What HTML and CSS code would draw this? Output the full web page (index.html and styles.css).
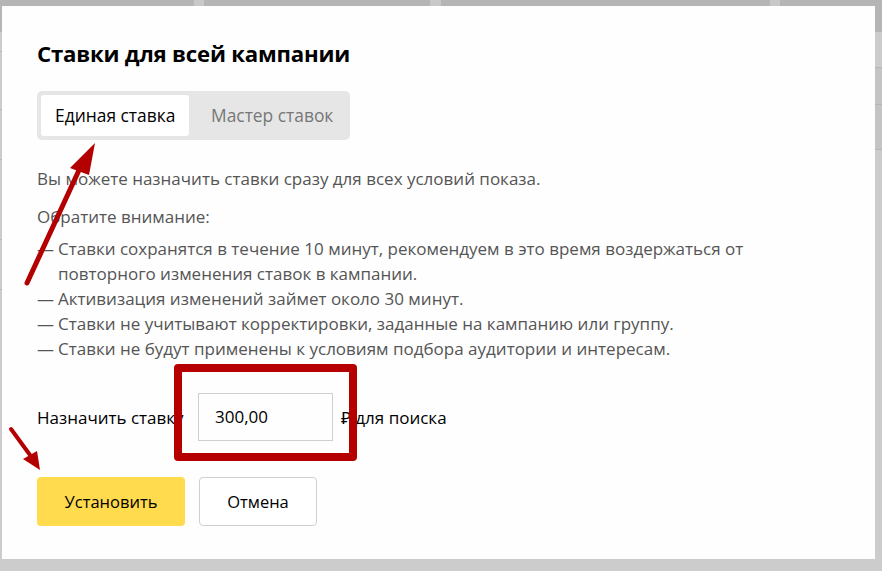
FILE: index.html
```html
<!DOCTYPE html>
<html lang="ru">
<head>
<meta charset="utf-8">
<link rel="stylesheet" href="styles.css">
</head>
<body>
<div class="page">
  <div class="topbar">
    <span class="seg s1"></span><span class="seg s2"></span><span class="seg s3"></span>
  </div>
  <div class="leftcol">
    <div class="lrow r1"></div>
    <div class="lrow r2"></div>
    <div class="lrow r3"></div>
    <div class="lrow r4"></div>
    <div class="lrow r5"></div>
  </div>
  <div class="rightcol">
    <div class="rrow"></div>
    <div class="rrow"></div>
    <div class="rrow"></div>
  </div>
</div>

<div class="modal">
  <h1 class="title">Ставки для всей кампании</h1>
  <div class="tabs">
    <div class="tab active">Единая ставка</div>
    <div class="tab">Мастер ставок</div>
  </div>
  <p class="lead">Вы можете назначить ставки сразу для всех условий показа.</p>
  <p class="note">Обратите внимание:</p>
  <ul class="list">
    <li>Ставки сохранятся в течение 10 минут, рекомендуем в это время воздержаться от повторного изменения ставок в кампании.</li>
    <li>Активизация изменений займет около 30 минут.</li>
    <li>Ставки не учитывают корректировки, заданные на кампанию или группу.</li>
    <li>Ставки не будут применены к условиям подбора аудитории и интересам.</li>
  </ul>
  <div class="bid">
    <span class="bid-label">Назначить ставку</span>
    <div class="input">300,00</div>
    <span class="bid-suffix">₽ для поиска</span>
  </div>
  <div class="actions">
    <button class="btn primary">Установить</button>
    <button class="btn secondary">Отмена</button>
  </div>
</div>

<div class="highlight"></div>
<svg class="arrows" width="882" height="571" viewBox="0 0 882 571">
  <path d="M27 283 L80 168" stroke="#b30000" stroke-width="5" stroke-linecap="round" fill="none"/>
  <path d="M95 143 L70 168 L89 175 Z" fill="#b30000"/>
  <path d="M11 429 L30 455" stroke="#b30000" stroke-width="4" stroke-linecap="round" fill="none"/>
  <path d="M40 470 L23 459 L37 451 Z" fill="#b30000"/>
</svg>
</body>
</html>
```
FILE: styles.css
```css
* { box-sizing: border-box; }
html, body { margin: 0; padding: 0; }
body {
  width: 882px;
  height: 571px;
  overflow: hidden;
  background: #cccccc;
  font-family: "Open Sans", "Noto Sans", sans-serif;
  position: relative;
}
.page { width: 882px; height: 571px; }
.topbar {
  height: 32px;
  background: #b5b5b5;
  position: relative;
}
.seg { position: absolute; top: 0; height: 6px; background: #c8c8c8; }
.s1 { left: 194px; width: 10px; }
.s2 { left: 430px; width: 11px; }
.s3 { left: 770px; width: 10px; }
.leftcol { position: absolute; left: 0; top: 32px; width: 3px; }
.lrow { border-bottom: 1px solid #b9b9b9; }
.r1 { height: 20px; }
.r2 { height: 58px; }
.r3 { height: 50px; }
.r4 { height: 80px; }
.r5 { height: 50px; }
.rightcol { position: absolute; right: 0; top: 32px; width: 7px; }
.rrow { height: 36px; border-bottom: 1px solid #b5b5b5; }
.rrow:nth-child(2) { height: 37px; background: #c4c4c4; }
.rrow:nth-child(3) { height: 45px; background: #c4c4c4; }

.modal {
  position: absolute;
  left: 2px;
  top: 6px;
  width: 873px;
  height: 553px;
  background: #fefefe;
  padding: 32px 35px 0 35px;
}
.title {
  margin: 0;
  font-size: 22.2px;
  font-weight: 700;
  color: #000;
  line-height: 32px;
  letter-spacing: -0.2px;
}
.tabs {
  margin-top: 21px;
  display: inline-flex;
  background: #e6e6e6;
  border-radius: 5px;
  padding: 4px;
  width: 313px;
  height: 49px;
}
.tab {
  height: 41px;
  line-height: 41px;
  font-size: 17.4px;
  color: #777;
  padding: 0 14px;
  white-space: nowrap;
}
.tab.active {
  background: #fff;
  color: #000;
  border-radius: 3px;
  width: 148px;
  margin-right: 8px;
}
.lead, .note {
  margin: 0;
  font-size: 17px;
  color: #555;
  line-height: 25px;
}
.lead { margin-top: 26px; }
.note { margin-top: 13px; }
.list {
  list-style: none;
  margin: 7px 0 0;
  padding: 0;
  font-size: 17px;
  color: #555;
  line-height: 25px;
  width: 760px;
}
.list li { padding-left: 21px; position: relative; }
.list li::before { content: "—"; position: absolute; left: 0; }
.bid {
  margin-top: 32px;
  display: flex;
  align-items: center;
  height: 48px;
  font-size: 17px;
  color: #000;
}
.bid-label { width: 161px; white-space: nowrap; }
.input {
  width: 135px;
  height: 48px;
  border: 1px solid #cfcfcf;
  padding-left: 16px;
  line-height: 46px;
}
.bid-suffix { margin-left: 8px; }
.actions {
  margin-top: 36px;
  display: flex;
  gap: 14px;
}
.btn {
  height: 49px;
  border-radius: 4px;
  font-family: inherit;
  font-size: 16.5px;
  color: #000;
  padding: 0;
}
.primary { width: 148px; background: #ffdb4d; border: none; }
.secondary { width: 118px; background: #fff; border: 1px solid #d0d0d0; }

.highlight {
  position: absolute;
  left: 174px;
  top: 364px;
  width: 183px;
  height: 97px;
  border: 8px solid #b60000;
  border-radius: 4px;
}
.arrows { position: absolute; left: 0; top: 0; pointer-events: none; }
```
